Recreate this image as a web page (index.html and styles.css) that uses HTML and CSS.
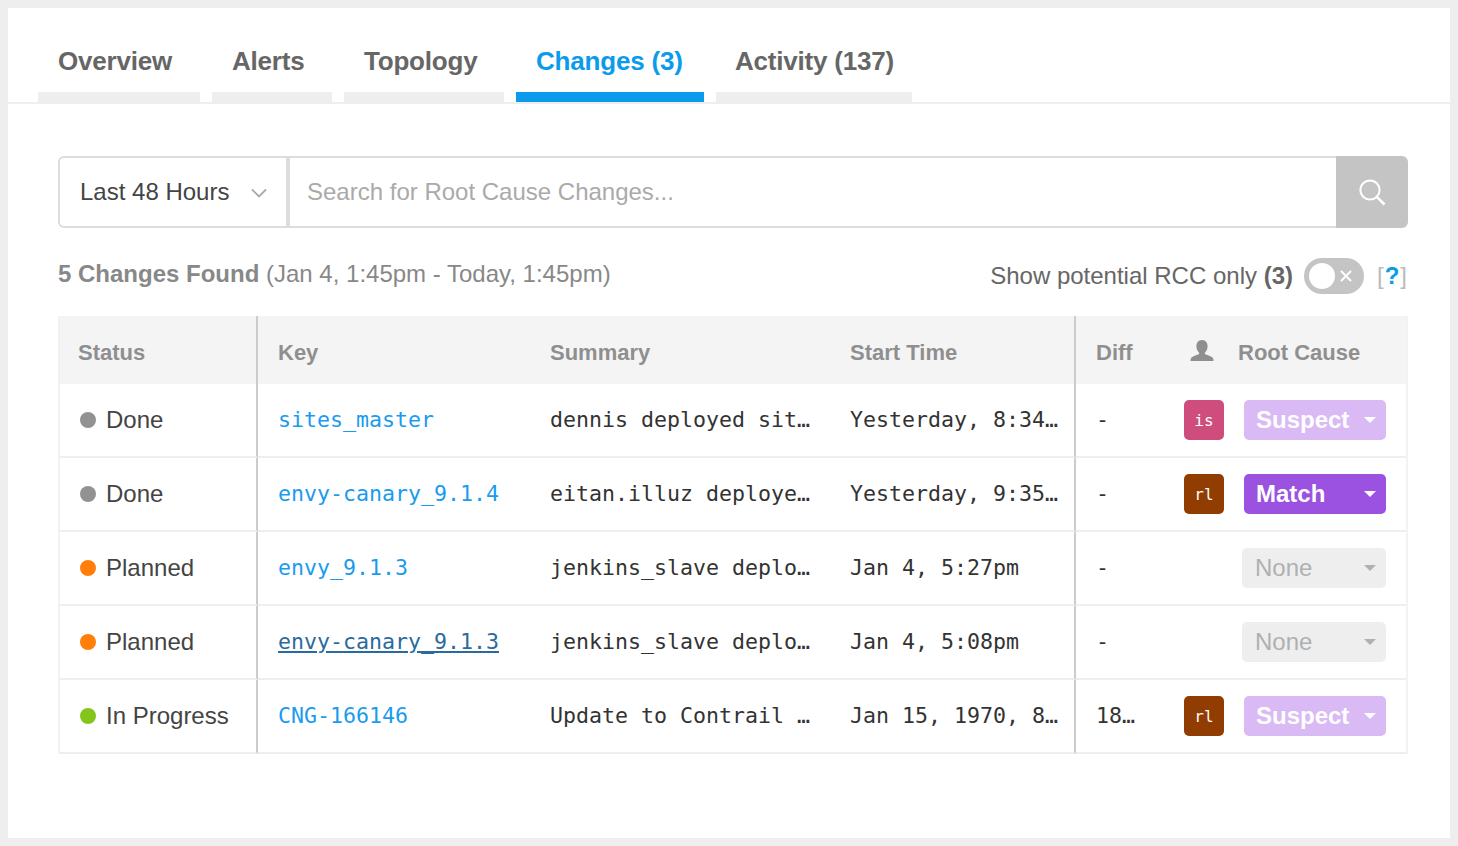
FILE: index.html
```html
<!DOCTYPE html>
<html lang="en">
<head>
<meta charset="utf-8">
<title>Changes</title>
<link rel="stylesheet" href="styles.css">
</head>
<body>
<main class="card">
  <nav class="tabs">
    <a class="tab">Overview</a>
    <a class="tab">Alerts</a>
    <a class="tab">Topology</a>
    <a class="tab active">Changes (3)</a>
    <a class="tab">Activity (137)</a>
  </nav>
  <section class="content">
    <div class="search">
      <div class="range">
        <span>Last 48 Hours</span>
        <svg class="chev" width="18" height="10" viewBox="0 0 18 10"><path d="M2 1.5 9 8.5 16 1.5" fill="none" stroke="#aaa" stroke-width="1.8"/></svg>
      </div>
      <div class="query">Search for Root Cause Changes...</div>
      <div class="go">
        <svg width="28" height="28" viewBox="0 0 28 28"><circle cx="12" cy="12" r="9.6" fill="none" stroke="#fff" stroke-width="2"/><path d="M18.8 18.8 26.500 26.500" stroke="#fff" stroke-width="2.600" fill="none"/></svg>
      </div>
    </div>
    <div class="meta">
      <p class="found"><b>5 Changes Found</b> (Jan 4, 1:45pm - Today, 1:45pm)</p>
      <div class="filter">
        <span>Show potential RCC only <b>(3)</b></span>
        <span class="toggle"><i class="knob"></i><svg width="12" height="12" viewBox="0 0 12 12"><path d="M1 1 11 11M11 1 1 11" stroke="#fff" stroke-width="2"/></svg></span>
        <span class="help">[<b>?</b>]</span>
      </div>
    </div>
    <table class="grid">
      <colgroup>
        <col class="c-status"><col class="c-key"><col class="c-summary"><col class="c-start"><col class="c-diff"><col class="c-user"><col class="c-root">
      </colgroup>
      <thead>
        <tr>
          <th class="rule status-head">Status</th>
          <th>Key</th>
          <th>Summary</th>
          <th class="rule">Start Time</th>
          <th>Diff</th>
          <th class="user-head"><svg width="24" height="24" viewBox="0 0 24 24"><path d="M12 1c3.6 0 5.6 2.8 5.6 6.3 0 2.5-1 4.9-2.5 6.2-.5.5-.4 1.400.2 1.800 1.500.8 4.900 1.700 6.800 3 1 .7 1.400 1.800 1.400 3.700H.5c0-1.900.4-3 1.400-3.700 1.900-1.300 5.300-2.200 6.800-3 .6-.4.7-1.300.2-1.800C7.400 12.200 6.400 9.800 6.400 7.300 6.400 3.800 8.400 1 12 1z" fill="#8f8f8f"/></svg></th>
          <th class="root-head">Root Cause</th>
        </tr>
      </thead>
      <tbody>
        <tr>
          <td class="rule"><span class="status"><i class="dot grey"></i>Done</span></td>
          <td class="mono"><a class="link">sites_master</a></td>
          <td class="mono">dennis deployed sit…</td>
          <td class="mono rule">Yesterday, 8:34…</td>
          <td class="mono">-</td>
          <td class="user"><span class="badge pink">is</span></td>
          <td><span class="pick suspect">Suspect<i class="caret"></i></span></td>
        </tr>
        <tr>
          <td class="rule"><span class="status"><i class="dot grey"></i>Done</span></td>
          <td class="mono"><a class="link">envy-canary_9.1.4</a></td>
          <td class="mono">eitan.illuz deploye…</td>
          <td class="mono rule">Yesterday, 9:35…</td>
          <td class="mono">-</td>
          <td class="user"><span class="badge brown">rl</span></td>
          <td><span class="pick match">Match<i class="caret"></i></span></td>
        </tr>
        <tr>
          <td class="rule"><span class="status"><i class="dot orange"></i>Planned</span></td>
          <td class="mono"><a class="link">envy_9.1.3</a></td>
          <td class="mono">jenkins_slave deplo…</td>
          <td class="mono rule">Jan 4, 5:27pm</td>
          <td class="mono">-</td>
          <td class="user"></td>
          <td><span class="pick none">None<i class="caret"></i></span></td>
        </tr>
        <tr>
          <td class="rule"><span class="status"><i class="dot orange"></i>Planned</span></td>
          <td class="mono"><a class="link hover">envy-canary_9.1.3</a></td>
          <td class="mono">jenkins_slave deplo…</td>
          <td class="mono rule">Jan 4, 5:08pm</td>
          <td class="mono">-</td>
          <td class="user"></td>
          <td><span class="pick none">None<i class="caret"></i></span></td>
        </tr>
        <tr>
          <td class="rule"><span class="status"><i class="dot green"></i>In Progress</span></td>
          <td class="mono"><a class="link">CNG-166146</a></td>
          <td class="mono">Update to Contrail …</td>
          <td class="mono rule">Jan 15, 1970, 8…</td>
          <td class="mono">18…</td>
          <td class="user"><span class="badge brown">rl</span></td>
          <td><span class="pick suspect">Suspect<i class="caret"></i></span></td>
        </tr>
      </tbody>
    </table>
  </section>
</main>
</body>
</html>
```
FILE: styles.css
```css
* { box-sizing: border-box; }
html, body { height: 100%; }
body {
  margin: 0;
  padding: 8px;
  background: #eeeeee;
  font-family: "Liberation Sans", Arial, sans-serif;
  font-size: 24px;
  color: #444;
  overflow: hidden;
}
.card { background: #fff; height: 830px; }

.tabs {
  display: grid;
  grid-template-columns: 162px 120px 160px 188px 196px;
  column-gap: 12px;
  height: 96px;
  padding-left: 30px;
  border-bottom: 2px solid #eeeeee;
}
.tab {
  height: 94px;
  padding: 37px 0 0 20px;
  border-bottom: 10px solid #eeeeee;
  font-size: 26px;
  line-height: 32px;
  font-weight: 700;
  letter-spacing: -0.2px;
  color: #666;
}
.tab:last-child { padding-left: 19px; }
.tab.active { color: #0a9bec; border-bottom-color: #0a9bec; }

.content { padding: 52px 42px 0 50px; }

.search {
  display: flex;
  height: 72px;
  border-radius: 6px;
}
.range {
  width: 232px;
  display: flex;
  align-items: center;
  justify-content: space-between;
  padding: 0 18px 0 20px;
  border: 2px solid #dddddd;
  border-right-width: 4px;
  border-radius: 6px 0 0 6px;
  color: #444;
}
.chev { margin-top: 1px; }
.query {
  flex: 1;
  display: flex;
  align-items: center;
  padding-left: 17px;
  border: 2px solid #dddddd;
  border-width: 2px 0;
  color: #aaa;
}
.go {
  width: 72px;
  display: flex;
  align-items: center;
  justify-content: center;
  background: #c4c4c4;
  border-radius: 0 6px 6px 0;
}

.meta {
  display: flex;
  justify-content: space-between;
  align-items: center;
  height: 88px;
  padding-top: 8px;
  color: #777;
}
.found { margin: 0; padding-bottom: 4px; color: #888; }
.found b { color: #888; }
.filter { display: flex; align-items: center; color: #666; }
.filter b { color: #666; }
.toggle {
  position: relative;
  display: flex;
  align-items: center;
  justify-content: flex-end;
  width: 60px;
  height: 36px;
  margin: 0 13px 0 11px;
  padding-right: 12px;
  border-radius: 18px;
  background: #c4c4c4;
}
.knob {
  position: absolute;
  left: 5px;
  top: 5px;
  width: 26px;
  height: 26px;
  border-radius: 50%;
  background: #fff;
}
.help { color: #bbb; letter-spacing: 1px; }
.help b { color: #0a9bec; }

.grid {
  width: 1350px;
  table-layout: fixed;
  border-collapse: separate;
  border-spacing: 0;
  border-left: 2px solid #f2f2f2;
  border-right: 2px solid #f2f2f2;
}
.c-status { width: 198px; }
.c-key { width: 272px; }
.c-summary { width: 300px; }
.c-start { width: 246px; }
.c-diff { width: 88px; }
.c-user { width: 60px; }
.c-root { width: 182px; }

th {
  height: 68px;
  padding: 5px 0 0 20px;
  background: #f4f4f4;
  font-size: 22px;
  font-weight: 700;
  text-align: left;
  color: #8f8f8f;
}
td {
  height: 74px;
  padding: 0 0 0 20px;
  border-bottom: 2px solid #eeeeee;
  white-space: nowrap;
  vertical-align: middle;
}
th.rule, td.rule { border-right: 2px solid #cccccc; }
.status-head { padding-left: 18px; }
.user-head { padding: 2px 0 0 26px; }
.user-head svg { display: block; }
th.root-head { padding-left: 14px; white-space: nowrap; }

.status { display: flex; align-items: center; color: #444; }
.dot { width: 16px; height: 16px; border-radius: 50%; margin-right: 10px; }
.grey { background: #929292; }
.orange { background: #ff7f0a; }
.green { background: #84c51c; }

.mono {
  padding-bottom: 2px;
  font-family: "DejaVu Sans Mono", "Liberation Mono", monospace;
  font-size: 21.6px;
  color: #333;
}
.link { color: #1a9bee; }
.link.hover { color: #2a6a9e; text-decoration: underline; }

.badge {
  display: flex;
  align-items: center;
  justify-content: center;
  width: 40px;
  height: 40px;
  border-radius: 5px;
  font-family: "DejaVu Sans Mono", monospace;
  font-size: 16px;
  color: #fff;
}
.pink { background: #cf4d7d; }
.brown { background: #913c00; }

.pick {
  position: relative;
  display: flex;
  align-items: center;
  width: 142px;
  height: 40px;
  padding-left: 12px;
  border-radius: 5px;
  font-weight: 700;
  color: #fff;
}
.suspect { background: #d9baf4; }
.match { background: #9b52e0; }
.none {
  width: 144px;
  margin-left: -2px;
  padding-left: 13px;
  background: #eeeeee;
  color: #b0b0b0;
  font-weight: 400;
}
.caret {
  position: absolute;
  right: 10px;
  top: 17px;
  width: 0;
  height: 0;
  border-left: 6px solid transparent;
  border-right: 6px solid transparent;
  border-top: 6px solid #fff;
}
.none .caret { border-top-color: #b0b0b0; }
```
